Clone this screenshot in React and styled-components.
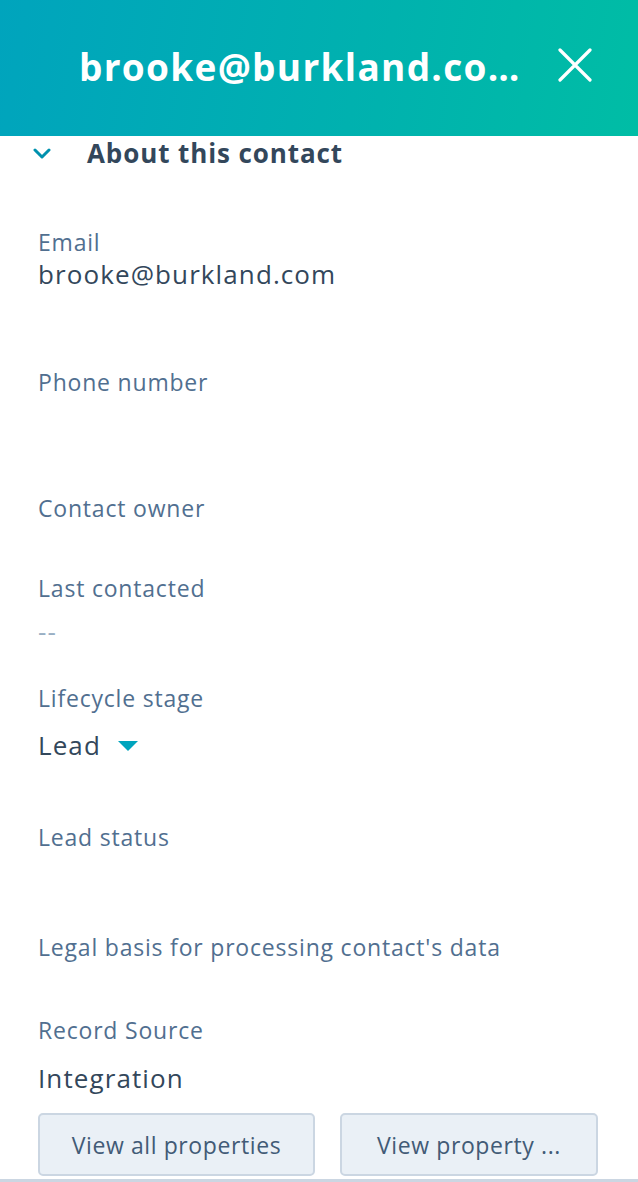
import styled, { createGlobalStyle } from "styled-components";

const GlobalStyle = createGlobalStyle`
  body {
    margin: 0;
    background: #ffffff;
    font-family: "Open Sans", "Noto Sans", sans-serif;
  }
`;

const Panel = styled.div`
  width: 638px;
  height: 1182px;
  overflow: hidden;
  display: flex;
  flex-direction: column;
`;

const Header = styled.header`
  height: 136px;
  flex-shrink: 0;
  display: flex;
  align-items: center;
  justify-content: space-between;
  padding: 0 46px 0 79px;
  box-sizing: border-box;
  background: linear-gradient(100deg, #00a4bd 0%, #00b2ae 60%, #00bda5 100%);
`;

const Title = styled.h1`
  margin: -4px 0 0;
  max-width: 444px;
  color: #ffffff;
  font-size: 37px;
  font-weight: 700;
  letter-spacing: 1.3px;
  white-space: nowrap;
  overflow: hidden;
  text-overflow: ellipsis;
`;

const CloseButton = styled.button`
  border: none;
  background: none;
  padding: 0;
  width: 34px;
  height: 34px;
  margin-top: -6px;
  display: flex;
  align-items: center;
  justify-content: center;
  cursor: pointer;
`;

const SectionHead = styled.div`
  display: flex;
  align-items: center;
  height: 36px;
  padding-left: 33px;
`;

const SectionTitle = styled.h2`
  margin: -2px 0 0 36px;
  color: #33475b;
  font-size: 26px;
  font-weight: 700;
  letter-spacing: 0.9px;
`;

const Body = styled.div`
  padding: 55px 0 0 38px;
  display: flex;
  flex-direction: column;
`;

const Field = styled.div`
  display: flex;
  flex-direction: column;
  padding-bottom: ${(p) => p.$space}px;
`;

const Label = styled.div`
  color: #516f90;
  font-size: 23px;
  letter-spacing: 0.8px;
  line-height: 30px;
`;

const Value = styled.div`
  display: flex;
  align-items: center;
  gap: 17px;
  margin-top: ${(p) => p.$offset || 0}px;
  color: ${(p) => (p.$muted ? "#99afc4" : "#33475b")};
  font-size: 26px;
  letter-spacing: 1.1px;
  line-height: 34px;
`;

const Caret = styled.span`
  width: 0;
  height: 0;
  border-left: 10px solid transparent;
  border-right: 10px solid transparent;
  border-top: 10px solid #00a4bd;
  margin-top: 2px;
`;

const Actions = styled.div`
  display: flex;
  gap: 25px;
  padding-right: 40px;
`;

const ActionButton = styled.button`
  height: 63px;
  width: ${(p) => p.$w}px;
  border: 2px solid #cbd6e2;
  border-radius: 5px;
  background: #eaf0f6;
  color: #425b76;
  font-family: inherit;
  font-size: 23px;
  letter-spacing: 0.6px;
  cursor: pointer;
`;

const Rule = styled.div`
  margin-top: 3px;
  height: 3px;
  background: #cbd6e2;
`;

const fields = [
  { label: "Email", value: "brooke@burkland.com", space: 76 },
  { label: "Phone number", space: 96 },
  { label: "Contact owner", space: 50 },
  { label: "Last contacted", value: "--", muted: true, offset: 11, space: 35 },
  { label: "Lifecycle stage", value: "Lead", caret: true, offset: 15, space: 60 },
  { label: "Lead status", space: 80 },
  { label: "Legal basis for processing contact's data", space: 53 },
  { label: "Record Source", value: "Integration", offset: 16, space: 18 },
];

export default function App() {
  return (
    <>
      <GlobalStyle />
      <Panel>
        <Header>
          <Title>brooke@burkland.com</Title>
          <CloseButton aria-label="Close">
            <svg width="34" height="34" viewBox="0 0 34 34">
              <path
                d="M2 2 L32 32 M32 2 L2 32"
                stroke="#ffffff"
                strokeWidth="3.2"
                strokeLinecap="round"
              />
            </svg>
          </CloseButton>
        </Header>
        <SectionHead>
          <svg width="18" height="12" viewBox="0 0 18 12">
            <path
              d="M2 2 L9 9 L16 2"
              fill="none"
              stroke="#0091ae"
              strokeWidth="3"
              strokeLinecap="round"
              strokeLinejoin="round"
            />
          </svg>
          <SectionTitle>About this contact</SectionTitle>
        </SectionHead>
        <Body>
          {fields.map((f) => (
            <Field key={f.label} $space={f.space}>
              <Label>{f.label}</Label>
              {f.value && (
                <Value $offset={f.offset} $muted={f.muted}>
                  {f.value}
                  {f.caret && <Caret />}
                </Value>
              )}
            </Field>
          ))}
          <Actions>
            <ActionButton $w={277}>View all properties</ActionButton>
            <ActionButton $w={258}>View property ...</ActionButton>
          </Actions>
        </Body>
        <Rule />
      </Panel>
    </>
  );
}
